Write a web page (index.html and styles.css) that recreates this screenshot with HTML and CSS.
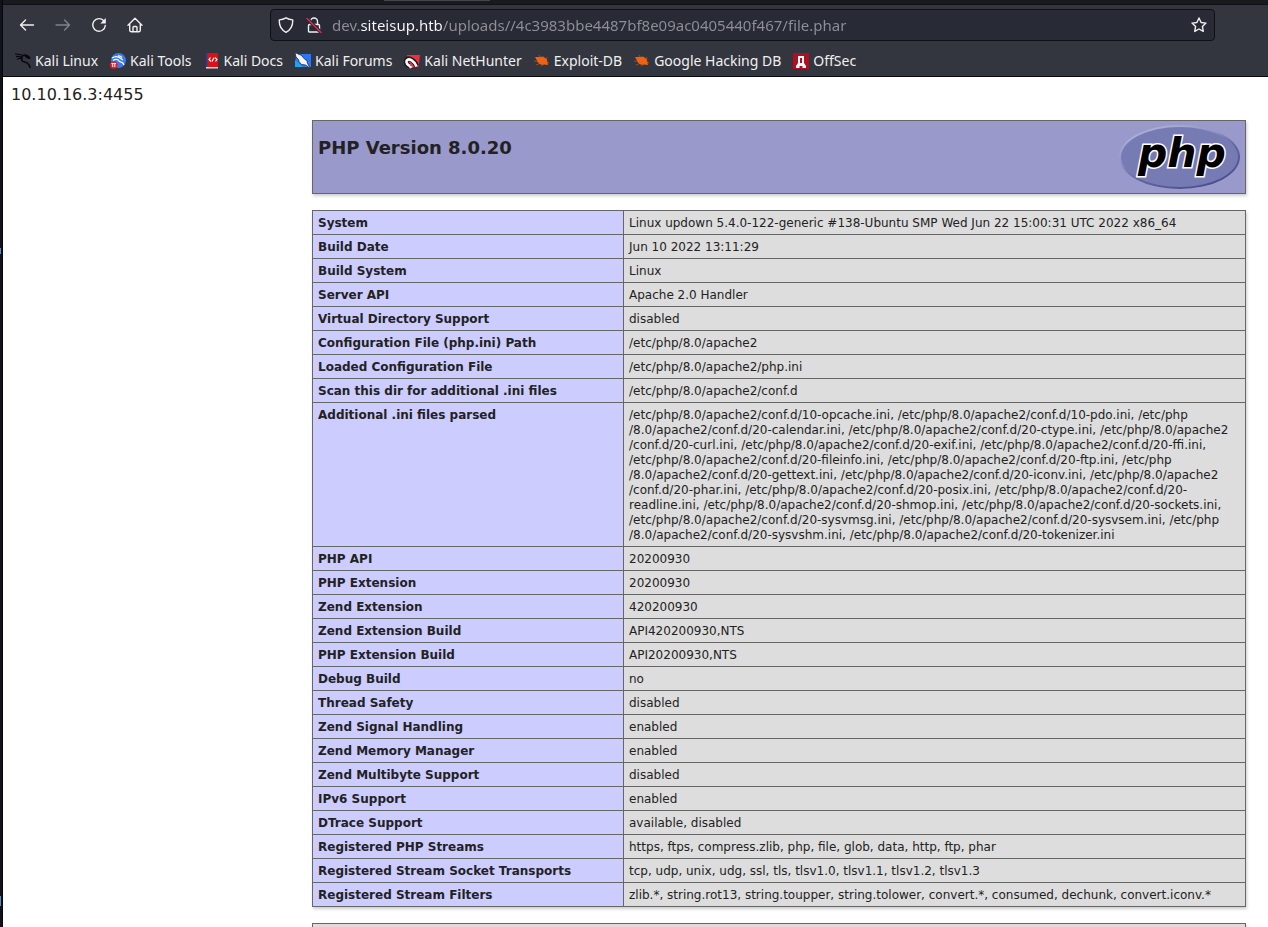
FILE: index.html
```html
<!DOCTYPE html>
<html lang="en">
<head>
<meta charset="utf-8">
<title>PHP 8.0.20 - phpinfo()</title>
<link rel="stylesheet" href="styles.css">
</head>
<body>
<div class="desktop"><i class="glint"></i><i class="glint low"></i></div>
<div class="browser">
  <div class="tabstrip"><div class="tab"></div></div>
  <header class="chrome">
    <div class="navbar">
      <div class="navbuttons">
        <button aria-label="Back"><svg viewBox="0 0 16 16"><path d="M14.500 8H1.500M6.500 3 1.500 8l5 5"/></svg></button>
        <button aria-label="Forward" disabled><svg viewBox="0 0 16 16"><path d="M1 8h13.500M9.500 3l5 5-5 5"/></svg></button>
        <button aria-label="Reload"><svg viewBox="0 0 16 16"><path d="M12.800 3.800A6.300 6.300 0 1 0 14.300 8.500"/><path class="solid" d="M14.800 1v5.500H9.300z"/></svg></button>
        <button aria-label="Home"><svg viewBox="0 0 16 16"><path d="M1 8.200 8 1.300l7 6.900M2.700 7v6.300a1.400 1.400 0 0 0 1.400 1.400h7.800a1.400 1.400 0 0 0 1.400-1.400V7M6 14.500V10.500a1 1 0 0 1 1-1h2a1 1 0 0 1 1 1v4"/></svg></button>
      </div>
      <div class="urlbar">
        <svg class="shield" viewBox="0 0 16 16"><path d="M8 .8c2 1.200 4.400 1.900 6.700 2.100.3 5.300-1.200 9.500-6.700 12.400C2.500 12.400 1 8.200 1.300 2.900 3.600 2.700 6 2 8 .8z"/></svg>
        <svg class="lock" viewBox="0 0 16 16"><path d="M4.500 7V4.500a3.500 3.500 0 0 1 7 0V7M3.500 7.500h9a1 1 0 0 1 1 1v5.500a1 1 0 0 1-1 1h-9a1 1 0 0 1-1-1V8.500a1 1 0 0 1 1-1z"/><path class="gap" d="M1 1.500 15 15.500"/><path class="slash" d="M1 1.500 15 15.500"/></svg>
        <input class="address" type="text" aria-label="Address" spellcheck="false" value="dev.siteisup.htb/uploads//4c3983bbe4487bf8e09ac0405440f467/file.phar">
        <button class="star" aria-label="Bookmark this page"><svg viewBox="0 0 16 16"><path d="m8 1 2.100 4.500 4.900.6-3.600 3.400.9 4.900L8 12l-4.300 2.400.9-4.900L1 6.100l4.900-.6z"/></svg></button>
      </div>
    </div>
    <nav class="bookmarks">
      <a href="#"><svg viewBox="0 0 16 16"><path fill="none" stroke="#08090b" stroke-width="1.100" d="M0 1c3 0 6 0 8 2M1 3.500c3-.5 5 0 6.500 1.500M2 6.500c2-1.500 4-1.500 5.500-.5"/><path fill="none" stroke="#08090b" stroke-width="1.600" d="M7.500 3c-2 3-1 5.500 2 6 3 .5 5 2 5.500 6M8 2.500c3-1 5 0 7 3"/><path fill="#08090b" d="m9 2.500 4 .5 2.500 3-3.500-.5z"/></svg>Kali Linux</a>
      <a href="#"><svg viewBox="0 0 16 16"><circle cx="8.500" cy="7.500" r="7.500" fill="#367bf0"/><path fill="none" stroke="#fff" stroke-width="1.200" d="M2 5c3-2 6-1.500 8 0l3 2M3 7.500c3-2 5-1 6 .5 1 1.500 4 0 5 4M8 3c2-.5 3 .5 4 1.500"/><circle cx="3.800" cy="12" r="3.800" fill="#ec1b24"/><path fill="none" stroke="#fff" d="M1.500 10.500h4.500M2.700 10.500V14M4.800 10.500V14"/></svg>Kali Tools</a>
      <a href="#"><svg viewBox="0 0 16 16"><path fill="#17469e" d="M2 0h3v14H2z"/><path fill="#dc1015" d="M3.500 0H14v14H3.500z"/><path fill="#ddd" d="M2 14h12v1.500H2z"/><path fill="none" stroke="#fff" stroke-width="1.200" d="M6.500 4.500 5 6.500l2 2M11 4.500l2 2-1.500 2M8 8.500 10 4.700"/></svg>Kali Docs</a>
      <a href="#"><svg viewBox="0 0 16 16"><path fill="#2777ff" d="M1 1h15v13H0z"/><path fill="#1aa7ee" d="M0 7l8 7H0z"/><path fill="#f4f4f4" stroke="#222832" stroke-width=".8" d="M0 0c2 .2 3 1 4 1.500l2 .5 4 4.500 2 1 .5 3 3 5-5-3.500-4-.5-2.500-3-.5-2L1 4z"/></svg>Kali Forums</a>
      <a href="#"><svg viewBox="0 0 16 16"><path fill="#f02f3a" d="M3 2h13l-1.500 12H5z"/><path fill="none" stroke="#171a20" stroke-width="5" d="M12.500 13C11 8 5 4 2.500 7c-1.500 2.500.500 5 3 6"/><path fill="none" stroke="#fff" stroke-width="2.600" d="M12.500 13.500C10.500 8 5 4.500 2.700 7.500c-1 2.500.800 4.500 3.300 5.500"/><path fill="#fff" d="m4 12 5 2-3 1.500z"/></svg>Kali NetHunter</a>
      <a href="#"><svg viewBox="0 0 16 16"><path class="legs" d="m5 2 2 4M9 3v3M13 4l-1 5 3 1M0 8l5 .5M2 12l5-2M7 13l3-2"/><path class="bug" d="m1 4 5 0c3-1 6 1 7 3l1 5-4-.5c-3 1-6-1-7-4z"/></svg>Exploit-DB</a>
      <a href="#"><svg viewBox="0 0 16 16"><path class="legs" d="m5 2 2 4M9 3v3M13 4l-1 5 3 1M0 8l5 .5M2 12l5-2M7 13l3-2"/><path class="bug" d="m1 4 5 0c3-1 6 1 7 3l1 5-4-.5c-3 1-6-1-7-4z"/></svg>Google Hacking DB</a>
      <a href="#"><svg viewBox="0 0 16 16"><path fill="#b30d20" d="M0 0h16v16H0z"/><path fill="#fff" d="M5 3h6v7l2 3v2H9.500v-2h-3v2H3v-2l2-3z"/><path fill="#b30d20" d="M7 5h2v5H7z"/></svg>OffSec</a>
    </nav>
  </header>
  <main class="page">
    <p class="output">10.10.16.3:4455</p>
    <div class="info">
      <div class="banner">
        <h1>PHP Version 8.0.20</h1>
        <svg class="logo" viewBox="0 0 121 64" role="img" aria-label="PHP logo">
          <defs><linearGradient id="rim" x1=".15" y1="0" x2=".8" y2="1"><stop offset="0" stop-color="#b4b8dc"/><stop offset=".35" stop-color="#9297c8"/><stop offset=".6" stop-color="#62669f"/><stop offset="1" stop-color="#484a8c"/></linearGradient></defs>
          <ellipse cx="60.500" cy="32" rx="60.500" ry="32" fill="url(#rim)"/>
          <ellipse cx="60.500" cy="32" rx="58.500" ry="30" fill="#777bb3"/>
          <text class="wordmark" x="19" y="42">php</text>
        </svg>
      </div>
      <table>
        <tr><th scope="row">System</th><td>Linux updown 5.4.0-122-generic #138-Ubuntu SMP Wed Jun 22 15:00:31 UTC 2022 x86_64</td></tr>
        <tr><th scope="row">Build Date</th><td>Jun 10 2022 13:11:29</td></tr>
        <tr><th scope="row">Build System</th><td>Linux</td></tr>
        <tr><th scope="row">Server API</th><td>Apache 2.0 Handler</td></tr>
        <tr><th scope="row">Virtual Directory Support</th><td>disabled</td></tr>
        <tr><th scope="row">Configuration File (php.ini) Path</th><td>/etc/php/8.0/apache2</td></tr>
        <tr><th scope="row">Loaded Configuration File</th><td>/etc/php/8.0/apache2/php.ini</td></tr>
        <tr><th scope="row">Scan this dir for additional .ini files</th><td>/etc/php/8.0/apache2/conf.d</td></tr>
        <tr><th scope="row">Additional .ini files parsed</th><td>/etc/php/8.0/apache2/conf.d/10-opcache.ini, /etc/php/8.0/apache2/conf.d/10-pdo.ini, /etc/php<br>/8.0/apache2/conf.d/20-calendar.ini, /etc/php/8.0/apache2/conf.d/20-ctype.ini, /etc/php/8.0/apache2<br>/conf.d/20-curl.ini, /etc/php/8.0/apache2/conf.d/20-exif.ini, /etc/php/8.0/apache2/conf.d/20-ffi.ini,<br>/etc/php/8.0/apache2/conf.d/20-fileinfo.ini, /etc/php/8.0/apache2/conf.d/20-ftp.ini, /etc/php<br>/8.0/apache2/conf.d/20-gettext.ini, /etc/php/8.0/apache2/conf.d/20-iconv.ini, /etc/php/8.0/apache2<br>/conf.d/20-phar.ini, /etc/php/8.0/apache2/conf.d/20-posix.ini, /etc/php/8.0/apache2/conf.d/20-<br>readline.ini, /etc/php/8.0/apache2/conf.d/20-shmop.ini, /etc/php/8.0/apache2/conf.d/20-sockets.ini,<br>/etc/php/8.0/apache2/conf.d/20-sysvmsg.ini, /etc/php/8.0/apache2/conf.d/20-sysvsem.ini, /etc/php<br>/8.0/apache2/conf.d/20-sysvshm.ini, /etc/php/8.0/apache2/conf.d/20-tokenizer.ini</td></tr>
        <tr><th scope="row">PHP API</th><td>20200930</td></tr>
        <tr><th scope="row">PHP Extension</th><td>20200930</td></tr>
        <tr><th scope="row">Zend Extension</th><td>420200930</td></tr>
        <tr><th scope="row">Zend Extension Build</th><td>API420200930,NTS</td></tr>
        <tr><th scope="row">PHP Extension Build</th><td>API20200930,NTS</td></tr>
        <tr><th scope="row">Debug Build</th><td>no</td></tr>
        <tr><th scope="row">Thread Safety</th><td>disabled</td></tr>
        <tr><th scope="row">Zend Signal Handling</th><td>enabled</td></tr>
        <tr><th scope="row">Zend Memory Manager</th><td>enabled</td></tr>
        <tr><th scope="row">Zend Multibyte Support</th><td>disabled</td></tr>
        <tr><th scope="row">IPv6 Support</th><td>enabled</td></tr>
        <tr><th scope="row">DTrace Support</th><td>available, disabled</td></tr>
        <tr><th scope="row">Registered PHP Streams</th><td>https, ftps, compress.zlib, php, file, glob, data, http, ftp, phar</td></tr>
        <tr><th scope="row">Registered Stream Socket Transports</th><td>tcp, udp, unix, udg, ssl, tls, tlsv1.0, tlsv1.1, tlsv1.2, tlsv1.3</td></tr>
        <tr><th scope="row">Registered Stream Filters</th><td>zlib.*, string.rot13, string.toupper, string.tolower, convert.*, consumed, dechunk, convert.iconv.*</td></tr>
      </table>
      <div class="engine"></div>
    </div>
  </main>
</div>
</body>
</html>
```
FILE: styles.css
```css
* { box-sizing: border-box; }
body {
  margin: 0;
  height: 100vh;
  display: flex;
  overflow: hidden;
  background: #fff;
  color: #222;
  font-family: "DejaVu Sans", sans-serif;
  font-size: 16px;
}
.desktop {
  flex: 0 0 3px;
  position: relative;
  background: linear-gradient(to right, #10121c 2px, #05060c 2px);
}
.glint {
  position: absolute;
  left: 0;
  top: 248px;
  width: 1px;
  height: 6px;
  background: #5b8ac0;
}
.glint.low { top: 896px; height: 10px; }
.browser { flex: 1; min-width: 0; }
.tabstrip {
  height: 5px;
  padding-left: 381px;
  background: #191a1e;
  border-bottom: 1px solid #101114;
}
.tab { width: 106px; height: 1px; background: #44464f; }
.chrome {
  background: #33363f;
  border-bottom: 1px solid #08090c;
  color: #f0f0f0;
  font-family: "Noto Sans", sans-serif;
  font-size: 14px;
}
button {
  display: flex;
  padding: 0;
  border: 0;
  background: none;
  color: inherit;
}
button:disabled { color: #81838a; }
svg { width: 16px; height: 16px; flex: none; }
button svg, .urlbar svg {
  fill: none;
  stroke: currentColor;
  stroke-width: 1.4;
  stroke-linecap: round;
  stroke-linejoin: round;
}
.navbar {
  display: flex;
  align-items: center;
  height: 40px;
  padding: 0 53px 0 16px;
  gap: 127px;
}
.navbuttons { display: flex; gap: 20px; }
.navbuttons .solid { fill: currentColor; stroke: none; }
.urlbar {
  flex: 1;
  display: flex;
  align-items: center;
  height: 32px;
  padding: 0 7px;
  border: 1px solid #0f1014;
  border-radius: 4px;
  background: #282a36;
}
.lock { margin: 0 10px 0 12px; }
.urlbar .gap { stroke: #282a36; stroke-width: 3.5; }
.urlbar .slash { stroke: #e22850; }
.address {
  flex: 1;
  min-width: 0;
  height: 28px;
  padding: 0;
  border: 0;
  outline: 0;
  background: linear-gradient(to right, #8f9097 28px, #fbfbfe 28px, #fbfbfe 110px, #8f9097 110px);
  -webkit-background-clip: text;
  background-clip: text;
  color: transparent;
  font: 15px "Noto Sans", sans-serif;
}
.bookmarks {
  display: flex;
  gap: 12px;
  height: 31px;
  padding: 0 12px;
  line-height: 31px;
}
.bookmarks a {
  display: flex;
  align-items: center;
  gap: 4px;
  color: inherit;
  text-decoration: none;
  white-space: nowrap;
}
.bug { fill: #ee6214; }
.legs { fill: none; stroke: #9e4a20; stroke-width: 1; }
.page { padding: 8px; }
.output { margin: 0; line-height: 19px; }
.info {
  width: 934px;
  margin: 16px 14px 0 auto;
  display: grid;
  gap: 16px;
}
.banner {
  display: flex;
  justify-content: space-between;
  padding: 4px 5px;
  border: 1px solid #666;
  background: #99c;
  box-shadow: 1px 2px 3px #ccc;
}
h1 { margin: 12px 0 0; font-size: 18px; line-height: 22px; }
.logo { width: 121px; height: 64px; }
.wordmark {
  font: italic bold 41px "DejaVu Sans", sans-serif;
  fill: #000;
  stroke: #fff;
  stroke-width: 3px;
  paint-order: stroke;
}
table {
  width: 100%;
  border-collapse: collapse;
  box-shadow: 1px 2px 3px #ccc;
  font-size: 12px;
  line-height: 15px;
}
th, td {
  padding: 5px 5px 3px;
  border: 1px solid #666;
  vertical-align: baseline;
  text-align: left;
}
th { width: 311px; background: #ccf; }
td { background: #ddd; }
.engine {
  height: 80px;
  border: 1px solid #666;
  background: #ddd;
  box-shadow: 1px 2px 3px #ccc;
}
```
